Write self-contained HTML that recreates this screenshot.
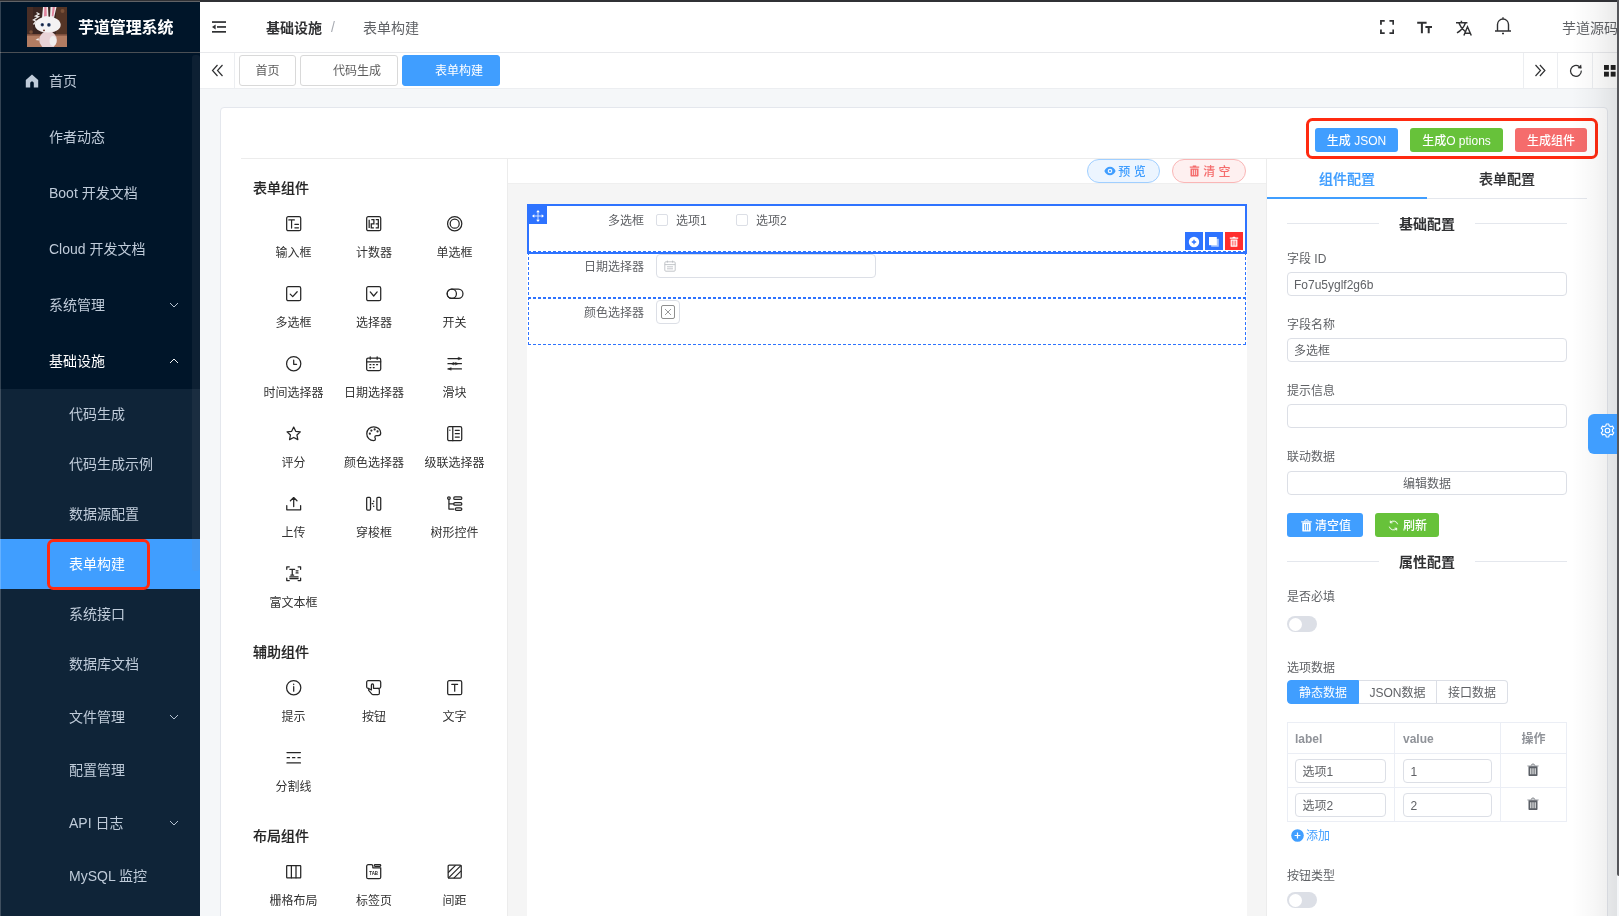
<!DOCTYPE html>
<html lang="zh-CN"><head><meta charset="utf-8"><title>芋道管理系统 - 表单构建</title>
<style>
*{box-sizing:border-box;margin:0;padding:0}
html,body{width:1619px;height:916px;overflow:hidden;background:#f5f7f9}
body{opacity:0.999;font-family:"Liberation Sans","Noto Sans CJK SC",sans-serif;font-size:14px;color:#303133;position:relative}
.abs{position:absolute}
#topbar{position:absolute;left:0;top:0;width:1619px;height:2px;background:#303135;z-index:50}
#side{position:absolute;left:0;top:2px;width:200px;height:914px;background:#001529;overflow:hidden}
#logo{position:absolute;left:0;top:0;width:200px;height:51px;border-bottom:1px solid #4a4f55}
#logo .t{position:absolute;left:78px;top:1px;line-height:50px;color:#fff;font-size:16px;font-weight:700;letter-spacing:-0.1px}
.mi{position:absolute;left:0;width:200px;color:#bfcbd9;font-size:14px;white-space:nowrap;margin-top:-2px}
.mi.open{color:#fff}
.mi.act{background:#409eff;color:#fff}
  .mi .arr{position:absolute;right:21.5px;top:50%;margin-top:-5px}
.mi .home{position:absolute;left:25px;top:50%;margin-top:-7px}
.sub{position:absolute;left:0;width:200px;background:#0f2438;margin-top:-2px}
#redside{position:absolute;left:47px;top:537px;width:103px;height:51px;border:3px solid #ff2a10;border-radius:6.5px}
#head{position:absolute;left:200px;top:2px;width:1419px;height:50.6px;background:#fff;border-bottom:1px solid #e8e9ec}
#tags{position:absolute;left:200px;top:52.6px;width:1419px;height:36px;background:#fff;border-bottom:1px solid #eceef1}
.tag{position:absolute;top:2.8px;height:30.6px;line-height:30.6px;overflow:hidden;border:1px solid #d9d9d9;border-radius:3px;font-size:12px;color:#5c5c5c;background:#fff;text-align:center}
.tag.on{background:#409eff;border-color:#409eff;color:#fff}
.vsep{position:absolute;top:0;width:1px;height:35px;background:#eceef1}
#card{position:absolute;left:220px;top:107px;width:1388px;height:820px;background:#fff;border:1px solid #e4e7ed;border-radius:4px}
#hline{position:absolute;left:241px;top:158px;width:1346px;height:1px;background:#ececec}
#hl2{position:absolute;left:508px;top:183px;width:758px;height:1px;background:#efefef}
#lp{position:absolute;left:241px;top:159px;width:267px;height:757px;border-right:1px solid #ececec;background:#fff}
.gt{position:absolute;left:253px;font-size:14px;font-weight:500;-webkit-text-stroke:0.15px #262626;color:#262626;line-height:20px;white-space:nowrap}
.it{position:absolute;width:80px;text-align:center;color:#262626}
.it .ic{display:block;height:15.4px;line-height:0}
.it .ic svg{overflow:visible}
.it .lb{position:absolute;left:-20px;width:120px;top:28.7px;font-size:12px;line-height:18px;color:#333;white-space:nowrap}
#cp{position:absolute;left:508px;top:183.5px;width:758px;height:733px;background:#f5f5f5}
#cw{position:absolute;left:527px;top:204px;width:720px;height:712px;background:#fff}
.pill{position:absolute;top:159px;height:24px;line-height:24px;overflow:hidden;border-radius:12px;font-size:12px;text-align:center;border:1px solid}
.btn{position:absolute;height:24px;line-height:26px;font-weight:500;overflow:hidden;border-radius:3px;color:#fff;font-size:12px;text-align:center;white-space:nowrap}
#redbox{position:absolute;left:1306.3px;top:118.2px;width:292px;height:40.4px;border:3px solid #ff2a10;border-radius:6.5px;z-index:5}
.wl{position:absolute;font-size:12px;color:#606266;text-align:right;width:110px;line-height:16px;white-space:nowrap}
.rl{position:absolute;left:1287px;font-size:12px;color:#606266;line-height:16px;white-space:nowrap}
.inp{position:absolute;left:1287px;width:280px;height:24px;border:1px solid #dcdfe6;border-radius:4px;background:#fff;font-size:12px;color:#606266;line-height:24px;padding-left:6px;overflow:hidden}
.dv{position:absolute;left:1287px;width:280px;height:1px;background:#e4e7ed}
.dvt{position:absolute;left:1379px;width:96px;text-align:center;background:#fff;font-size:14px;font-weight:700;color:#303133;line-height:20px}
.sw{position:absolute;left:1287px;width:30px;height:16px;border-radius:8px;background:#dcdfe6}
.sw:after{content:"";position:absolute;left:1.500px;top:1.500px;width:13px;height:13px;border-radius:50%;background:#fff}
</style></head><body>
<div id="side">
 <div id="logo">
  <svg class="abs" style="left:27px;top:5px" width="40" height="40" viewBox="0 0 40 40">
   <defs><filter id="bl" x="-10%" y="-10%" width="120%" height="120%"><feGaussianBlur stdDeviation="0.45"/></filter><clipPath id="lc"><rect width="40" height="40"/></clipPath></defs>
   <g clip-path="url(#lc)"><g filter="url(#bl)">
   <rect x="-2" y="-2" width="44" height="44" fill="#3b2620"/>
   <rect x="29" y="-2" width="13" height="32" fill="#553425"/><rect x="-2" y="-2" width="8" height="30" fill="#4a2e26"/>
   <circle cx="35.500" cy="4" r="2" fill="#7a5138"/><circle cx="4" cy="25" r="1.800" fill="#7a5138"/>
   <rect x="-2" y="27.600" width="44" height="14" fill="#b27c62"/><rect x="-2" y="27" width="44" height="1.600" fill="#7d4f3c"/>
   <path d="M9.500 5.500l2.500 1.500-3.500 2 3 .8-5 3.200 2.500 1.200-2.500 3.300" fill="none" stroke="#e9e6e6" stroke-width="1.300"/>
   <path d="M15 11L16 0h5l.5 10zM23 10l.5-10h6L27 11z" fill="#efebec"/>
   <path d="M17 9.500L17.300 0h2.200l.3 9zM24.800 9l.8-9h2.400L26.300 9.500z" fill="#e0829b"/>
   <ellipse cx="21" cy="33" rx="8.800" ry="9" fill="#e9d3d7"/><ellipse cx="26" cy="34" rx="3.500" ry="5" fill="#f1eeee"/>
   <ellipse cx="20.800" cy="17.800" rx="12.900" ry="8.200" fill="#f4f2f3"/>
   <path d="M12 23c3 3 14 3 18 0-2 3-15 4-18 0z" fill="#e6cfd3"/>
   <circle cx="15.300" cy="17.700" r="1.700" fill="#2c426f"/><circle cx="21.900" cy="17.900" r="1.800" fill="#27406e"/>
   <circle cx="15.300" cy="17.700" r=".7" fill="#111"/><circle cx="21.900" cy="17.900" r=".7" fill="#111"/>
   <ellipse cx="17" cy="23.300" rx="1" ry=".9" fill="#6b3a2c"/>
   <path d="M8.500 33l3-2 .5 2.500zM9.500 42l3-2 .8 2z" fill="#f1eeee"/>
   </g></g>
  </svg>
  <div class="t">芋道管理系统</div>
 </div>
 <div class="mi " style="top:53px;height:56px;line-height:56px;padding-left:49px"><svg class="home" width="14" height="14" viewBox="0 0 14 14"><path d="M7 .6L.8 6v7.400h4.400V9.200c0-2.400 3.600-2.400 3.600 0v4.200h4.400V6z" fill="currentColor"/></svg>首页</div><div class="mi " style="top:109px;height:56px;line-height:56px;padding-left:49px">作者动态</div><div class="mi " style="top:165px;height:56px;line-height:56px;padding-left:49px">Boot 开发文档</div><div class="mi " style="top:221px;height:56px;line-height:56px;padding-left:49px">Cloud 开发文档</div><div class="mi " style="top:277px;height:56px;line-height:56px;padding-left:49px">系统管理<svg class="arr" width="10" height="10" viewBox="0 0 10 10" fill="none" stroke="currentColor" stroke-width="0.95"><path d="M1 3l4 4 4-4"/></svg></div><div class="mi open" style="top:333px;height:56px;line-height:56px;padding-left:49px">基础设施<svg class="arr" width="10" height="10" viewBox="0 0 10 10" fill="none" stroke="currentColor" stroke-width="0.95"><path d="M1 7l4-4 4 4"/></svg></div><div class="sub" style="top:389px;height:527px"></div><div class="mi " style="top:389px;height:50px;line-height:50px;padding-left:69px">代码生成</div><div class="mi " style="top:439px;height:50px;line-height:50px;padding-left:69px">代码生成示例</div><div class="mi " style="top:489px;height:50px;line-height:50px;padding-left:69px">数据源配置</div><div class="mi act" style="top:539px;height:50px;line-height:50px;padding-left:69px">表单构建</div><div class="mi " style="top:589px;height:50px;line-height:50px;padding-left:69px">系统接口</div><div class="mi " style="top:639px;height:50px;line-height:50px;padding-left:69px">数据库文档</div><div class="mi " style="top:689px;height:56px;line-height:56px;padding-left:69px">文件管理<svg class="arr" width="10" height="10" viewBox="0 0 10 10" fill="none" stroke="currentColor" stroke-width="0.95"><path d="M1 3l4 4 4-4"/></svg></div><div class="mi " style="top:745px;height:50px;line-height:50px;padding-left:69px">配置管理</div><div class="mi " style="top:795px;height:56px;line-height:56px;padding-left:69px">API 日志<svg class="arr" width="10" height="10" viewBox="0 0 10 10" fill="none" stroke="currentColor" stroke-width="0.95"><path d="M1 3l4 4 4-4"/></svg></div><div class="mi " style="top:851px;height:50px;line-height:50px;padding-left:69px">MySQL 监控</div>
 <div id="redside"></div>
 <div class="abs" style="left:192px;top:53px;width:7.600px;height:516px;border-radius:3px;background:rgba(144,147,153,0.09)"></div>
</div>
<div id="head">
 <svg class="abs" style="left:11px;top:18px" width="16" height="14" viewBox="0 0 16 14" fill="#303133"><rect x="1" y="1.200" width="14" height="1.700"/><rect x="6" y="6.100" width="9" height="1.700"/><rect x="1" y="11" width="14" height="1.700"/><path d="M1 7l3.600-2.600v5.200z"/></svg>
 <div class="abs" style="left:66px;top:0.8px;line-height:50px;font-size:14px;font-weight:700;color:#303133;white-space:nowrap">基础设施</div>
 <div class="abs" style="left:131px;top:0;line-height:50px;font-size:14px;color:#a8abb2">/</div>
 <div class="abs" style="left:163px;top:0.8px;line-height:50px;font-size:14px;color:#606266;white-space:nowrap">表单构建</div>
 <svg class="abs" style="left:1179.6px;top:18px" width="14.2" height="14.2" viewBox="0 0 15 15" fill="none" stroke="#303133" stroke-width="1.900"><path d="M1 5V1h4M10 1h4v4M14 10v4h-4M5 14H1v-4"/></svg>
 <svg class="abs" style="left:1217px;top:18.500px" width="16" height="13" viewBox="0 0 16 13" fill="none" stroke="#303133" stroke-width="2"><path d="M.2 1.800h9.400M4.900 1.800v10.400M8.400 6h6.600M11.700 6v6.200"/></svg>
 <svg class="abs" style="left:1255px;top:17px" width="18" height="18" viewBox="0 0 18 18" fill="none" stroke="#303133" stroke-width="1.450"><path d="M1 3.700h11.400M6.400 1.800v1.900M10.400 3.900C9 8 6 11.500 2 13.900M4 4.300c1.200 3 3.200 5.800 5.900 8M8.900 16.500l3.600-8.700 3.800 8.700M10 14.200h5"/></svg>
 <svg class="abs" style="left:1294px;top:14px" width="18" height="19" viewBox="0 0 18 19" fill="none" stroke="#303133" stroke-width="1.400"><path d="M1 15h16M3.500 15V8.500C3.500 5.500 6 3 9 3s5.500 2.500 5.500 5.500V15M9 3V1.300M8 17.500h2"/></svg>
 <div class="abs" style="left:1362px;top:0.8px;line-height:50px;font-size:14px;color:#606266;white-space:nowrap">芋道源码</div>
</div>
<div id="tags">
 <svg class="abs" style="left:11px;top:11px" width="13" height="13" viewBox="0 0 13 13" fill="none" stroke="#303133" stroke-width="1.200"><path d="M6.500 1L1.500 6.500l5 5.500M11.500 1l-5 5.500 5 5.500"/></svg>
 <div class="vsep" style="left:34px"></div>
 <div class="tag" style="left:39px;width:57px">首页</div>
 <div class="tag" style="left:100px;width:98px;padding-left:16px">代码生成</div>
 <div class="tag on" style="left:202px;width:98px;padding-left:16px">表单构建</div>
 <div class="vsep" style="left:1323px"></div><div class="vsep" style="left:1357.4px"></div><div class="vsep" style="left:1392px"></div>
 <svg class="abs" style="left:1334px;top:11px" width="13" height="13" viewBox="0 0 13 13" fill="none" stroke="#303133" stroke-width="1.200"><path d="M1.500 1l5 5.500-5 5.500M5.900 1l5 5.500-5 5.500"/></svg>
 <svg class="abs" style="left:1368.500px;top:11.600px" width="14" height="14" viewBox="0 0 14 14" fill="none" stroke="#303133" stroke-width="1.250"><path d="M12.300 6.600A5.400 5.400 0 1 1 10.200 2.600"/><path d="M9 3.900l3.300.3L11.900.9z" fill="#303133" stroke-width=".6"/></svg>
 <svg class="abs" style="left:1403.700px;top:12.200px" width="12" height="12" viewBox="0 0 12 12" fill="#222"><rect x="0" y="0" width="4.900" height="4.900"/><rect x="6.700" y="0" width="4.900" height="4.900"/><rect x="0" y="6.700" width="4.900" height="4.900"/><rect x="6.700" y="6.700" width="4.900" height="4.900"/></svg>
</div>
<div id="card"></div>
<div id="hline"></div><div id="hl2"></div>
<div id="redbox"></div>
<div class="btn" style="left:1315px;top:128px;width:83px;background:#409eff">生成 JSON</div>
<div class="btn" style="left:1410px;top:128px;width:93px;background:#67c23a">生成O ptions</div>
<div class="btn" style="left:1515px;top:128px;width:72px;background:#f56c6c">生成组件</div>
<div id="lp"></div>
<div class="gt" style="top:177.5px">表单组件</div><div class="it" style="left:253.5px;top:215.70000000000002px"><span class="ic"><svg width="15.4" height="15.4" viewBox="0 0 16 16" fill="none" stroke="currentColor" stroke-width="1.3" stroke-linecap="round" stroke-linejoin="round" ><rect x="0.7" y="0.7" width="14.6" height="14.6" rx="1.6"/><path d="M2.9 4.1h5.8M5.8 4.1v8.4M9.2 8.7h3.8M9.2 12.3h3.8" stroke-width="1.25"/></svg></span><span class="lb">输入框</span></div><div class="it" style="left:334px;top:215.70000000000002px"><span class="ic"><svg width="15.4" height="15.4" viewBox="0 0 16 16" fill="none" stroke="currentColor" stroke-width="1.3" stroke-linecap="round" stroke-linejoin="round" ><rect x="0.7" y="0.7" width="14.6" height="14.6" rx="1.6"/><path d="M3.3 3.8v8.6M5.5 3.8h2.7v4.3H5.5v4.3h2.7M10.1 3.8h2.7v8.600h-2.7M10.100 8.1h2.7" stroke-linecap="butt" stroke-linejoin="miter"/></svg></span><span class="lb">计数器</span></div><div class="it" style="left:414.5px;top:215.70000000000002px"><span class="ic"><svg width="15.4" height="15.4" viewBox="0 0 16 16" fill="none" stroke="currentColor" stroke-width="1.3" stroke-linecap="round" stroke-linejoin="round" ><circle cx="8" cy="8" r="7.4"/><circle cx="8" cy="8" r="4.7"/></svg></span><span class="lb">单选框</span></div><div class="it" style="left:253.5px;top:285.7px"><span class="ic"><svg width="15.4" height="15.4" viewBox="0 0 16 16" fill="none" stroke="currentColor" stroke-width="1.3" stroke-linecap="round" stroke-linejoin="round" ><rect x="0.7" y="0.7" width="14.6" height="14.6" rx="1.6"/><path d="M4.4 8.4l2.6 2.6 4.6-5"/></svg></span><span class="lb">多选框</span></div><div class="it" style="left:334px;top:285.7px"><span class="ic"><svg width="15.4" height="15.4" viewBox="0 0 16 16" fill="none" stroke="currentColor" stroke-width="1.3" stroke-linecap="round" stroke-linejoin="round" ><rect x="0.7" y="0.7" width="14.6" height="14.6" rx="1.6"/><path d="M4.4 6.2l3.6 4.2 3.6-4.2"/></svg></span><span class="lb">选择器</span></div><div class="it" style="left:414.5px;top:285.7px"><span class="ic"><svg width="15.4" height="15.4" viewBox="0 0 16 16" fill="none" stroke="currentColor" stroke-width="1.3" stroke-linecap="round" stroke-linejoin="round" ><rect x="0.2" y="3.2" width="16.4" height="9.6" rx="4.8"/><circle cx="5" cy="8" r="4.8"/></svg></span><span class="lb">开关</span></div><div class="it" style="left:253.5px;top:355.7px"><span class="ic"><svg width="15.4" height="15.4" viewBox="0 0 16 16" fill="none" stroke="currentColor" stroke-width="1.3" stroke-linecap="round" stroke-linejoin="round" ><circle cx="8" cy="8" r="7.4"/><path d="M8 4.2v4.4h3"/></svg></span><span class="lb">时间选择器</span></div><div class="it" style="left:334px;top:355.7px"><span class="ic"><svg width="15.4" height="15.4" viewBox="0 0 16 16" fill="none" stroke="currentColor" stroke-width="1.3" stroke-linecap="round" stroke-linejoin="round" ><rect x="0.7" y="2.2" width="14.6" height="13" rx="1.6"/><path d="M0.7 6h14.6M4.4 0.8v2.6M11.6 0.8v2.6M4 9h1M7.5 9h1M11 9h1M4 12h1M7.5 12h1"/></svg></span><span class="lb">日期选择器</span></div><div class="it" style="left:414.5px;top:355.7px"><span class="ic"><svg width="15.4" height="15.4" viewBox="0 0 16 16" fill="none" stroke="currentColor" stroke-width="1.3" stroke-linecap="round" stroke-linejoin="round" ><path d="M1 2.6h14M1 8h14M1 13.4h14"/><path d="M12 1.4l2.6 1.2L12 3.8zM7 6.8l-2.6 1.2L7 9.2zM9 6.8l2.6 1.2L9 9.2zM4 12.2l-2.6 1.2L4 14.6z" fill="currentColor" stroke-width="0.6"/></svg></span><span class="lb">滑块</span></div><div class="it" style="left:253.5px;top:425.7px"><span class="ic"><svg width="15.4" height="15.4" viewBox="0 0 16 16" fill="none" stroke="currentColor" stroke-width="1.3" stroke-linecap="round" stroke-linejoin="round" ><path d="M8 1.1l2.1 4.4 4.8.6-3.5 3.3.9 4.8L8 11.9l-4.3 2.3.9-4.8L1.100 6.100l4.800-.600z"/></svg></span><span class="lb">评分</span></div><div class="it" style="left:334px;top:425.7px"><span class="ic"><svg width="15.4" height="15.4" viewBox="0 0 16 16" fill="none" stroke="currentColor" stroke-width="1.3" stroke-linecap="round" stroke-linejoin="round" ><path d="M8 .8C3.900.8.800 4 .800 8s3.200 7.200 7 7.200c1.300 0 2-.800 2-1.700 0-.900-.600-1.300-.600-2.100 0-.900.800-1.500 1.700-1.500h1.800c1.500 0 2.600-1.100 2.600-2.700C15.300 3.700 12 .8 8 .8z"/><circle cx="4" cy="8" r=".5"/><circle cx="5.600" cy="4.800" r=".5"/><circle cx="9" cy="3.600" r=".5"/><circle cx="12" cy="5.600" r=".5"/></svg></span><span class="lb">颜色选择器</span></div><div class="it" style="left:414.5px;top:425.7px"><span class="ic"><svg width="15.4" height="15.4" viewBox="0 0 16 16" fill="none" stroke="currentColor" stroke-width="1.3" stroke-linecap="round" stroke-linejoin="round" ><rect x="0.7" y="0.7" width="14.6" height="14.6" rx="1.6"/><path d="M6 .7v14.600M8.600 4.500h4.200M8.600 8h4.200M8.600 11.500h4.200M3 4.200v.3"/></svg></span><span class="lb">级联选择器</span></div><div class="it" style="left:253.5px;top:495.7px"><span class="ic"><svg width="15.4" height="15.4" viewBox="0 0 16 16" fill="none" stroke="currentColor" stroke-width="1.3" stroke-linecap="round" stroke-linejoin="round" ><path d="M.8 10v4.400h14.400V10M8 11V1.600M4.600 5L8 1.600 11.400 5"/></svg></span><span class="lb">上传</span></div><div class="it" style="left:334px;top:495.7px"><span class="ic"><svg width="15.4" height="15.4" viewBox="0 0 16 16" fill="none" stroke="currentColor" stroke-width="1.3" stroke-linecap="round" stroke-linejoin="round" ><rect x=".7" y="1.400" width="4" height="13.200" rx="1"/><rect x="11.300" y="1.400" width="4" height="13.200" rx="1"/><path d="M8 5.200v.4M8 10.400v.4M6.400 8h1"/></svg></span><span class="lb">穿梭框</span></div><div class="it" style="left:414.5px;top:495.7px"><span class="ic"><svg width="15.4" height="15.4" viewBox="0 0 16 16" fill="none" stroke="currentColor" stroke-width="1.3" stroke-linecap="round" stroke-linejoin="round" ><circle cx="2" cy="2.200" r="1.400"/><path d="M2 3.600v10h5M2 8.200h5"/><rect x="7" y="1" width="8.400" height="2.600" rx="1.300"/><rect x="7" y="6.900" width="8.400" height="2.600" rx="1.300"/><rect x="8.600" y="12.300" width="6.800" height="2.600" rx="1.300"/></svg></span><span class="lb">树形控件</span></div><div class="it" style="left:253.5px;top:565.6999999999999px"><span class="ic"><svg width="15.4" height="15.4" viewBox="0 0 16 16" fill="none" stroke="currentColor" stroke-width="1.3" stroke-linecap="round" stroke-linejoin="round" ><path d="M.8 3.400V.8h2.600M12.600.8h2.600v2.600M15.200 12.600v2.600h-2.600M3.400 15.200H.8v-2.600M4 3.400h5M6.500 3.400v6M5 9.400h3M10.500 5h2M10.500 7.200h2M4 11.400h8.600M4 13h8.600"/></svg></span><span class="lb">富文本框</span></div><div class="gt" style="top:641.5px">辅助组件</div><div class="it" style="left:253.5px;top:679.6999999999999px"><span class="ic"><svg width="15.4" height="15.4" viewBox="0 0 16 16" fill="none" stroke="currentColor" stroke-width="1.3" stroke-linecap="round" stroke-linejoin="round" ><circle cx="8" cy="8" r="7.400"/><path d="M8 7v4.600M8 4.400v.3"/></svg></span><span class="lb">提示</span></div><div class="it" style="left:334px;top:679.6999999999999px"><span class="ic"><svg width="15.4" height="15.4" viewBox="0 0 16 16" fill="none" stroke="currentColor" stroke-width="1.3" stroke-linecap="round" stroke-linejoin="round" ><path d="M3 8.600H2.300C1.400 8.600.7 7.900.7 7V2.300C.7 1.400 1.400.7 2.300.7h11.400c.9 0 1.600.7 1.600 1.600V7c0 .9-.7 1.600-1.600 1.600h-1.400"/><path d="M5.600 10.400V5.200c0-1.400 2.200-1.400 2.200 0v3.400h4.400c1 0 1.700.7 1.700 1.700v3.400c0 .9-.7 1.600-1.600 1.600H7.400c-.6 0-1.100-.3-1.500-.8L2.800 10.800c-.5-.8.700-1.900 1.500-1.200z"/></svg></span><span class="lb">按钮</span></div><div class="it" style="left:414.5px;top:679.6999999999999px"><span class="ic"><svg width="15.4" height="15.4" viewBox="0 0 16 16" fill="none" stroke="currentColor" stroke-width="1.3" stroke-linecap="round" stroke-linejoin="round" ><rect x="0.7" y="0.7" width="14.6" height="14.6" rx="1.6"/><path d="M5 4.600h6M8 4.600v7"/></svg></span><span class="lb">文字</span></div><div class="it" style="left:253.5px;top:749.6999999999999px"><span class="ic"><svg width="15.4" height="15.4" viewBox="0 0 16 16" fill="none" stroke="currentColor" stroke-width="1.3" stroke-linecap="round" stroke-linejoin="round" ><path d="M1 2.600h14M1 13.400h14M1.200 8h2.400M6.800 8h2.400M12.400 8h2.400"/></svg></span><span class="lb">分割线</span></div><div class="gt" style="top:825.5px">布局组件</div><div class="it" style="left:253.5px;top:863.6999999999999px"><span class="ic"><svg width="15.4" height="15.4" viewBox="0 0 16 16" fill="none" stroke="currentColor" stroke-width="1.3" stroke-linecap="round" stroke-linejoin="round" ><rect x=".7" y="1.700" width="14.600" height="12.600" rx=".6"/><path d="M5.600 1.700v12.600M10.400 1.700v12.600"/></svg></span><span class="lb">栅格布局</span></div><div class="it" style="left:334px;top:863.6999999999999px"><span class="ic"><svg width="15.4" height="15.4" viewBox="0 0 16 16" fill="none" stroke="currentColor" stroke-width="1.3" stroke-linecap="round" stroke-linejoin="round" ><path d="M2.300.7h3.200c.9 0 1.600.7 1.600 1.600v1.600h8.200v9.800c0 .9-.7 1.600-1.600 1.600H2.300c-.9 0-1.600-.7-1.600-1.600V2.300C.7 1.400 1.400.7 2.300.7z"/><rect x="8.600" y=".7" width="6.700" height="1.800" rx=".9"/><text x="8" y="11.700" font-size="4.600" font-weight="700" text-anchor="middle" fill="currentColor" stroke="none" font-family="Liberation Sans, sans-serif">TAB</text></svg></span><span class="lb">标签页</span></div><div class="it" style="left:414.5px;top:863.6999999999999px"><span class="ic"><svg width="15.4" height="15.4" viewBox="0 0 16 16" fill="none" stroke="currentColor" stroke-width="1.3" stroke-linecap="round" stroke-linejoin="round" ><rect x="1.200" y="1.200" width="13.600" height="13.600" rx="1.200"/><path d="M1.600 8.600L8.600 1.600M1.600 14.400L14.400 1.600M7.400 14.400l7-7" stroke-width="1.200"/></svg></span><span class="lb">间距</span></div>
<div id="cp"></div>
<div id="cw"></div>

<style>
.w{position:absolute;left:529px;width:716px;height:46px}
.w.sel{outline:2px solid #2e73ff;z-index:2}
.cb{position:absolute;width:12px;height:12px;border:1px solid #dcdfe6;border-radius:2px;background:#fff}
.tx{position:absolute;font-size:12px;color:#606266;line-height:16px;white-space:nowrap}
.ab{position:absolute;top:232px;width:18px;height:18px;z-index:3}
</style>
<div class="pill" style="left:1087.3px;width:72.7px;font-weight:500;background:#ecf5ff;border-color:#a0cfff;color:#409eff">
 <svg style="position:absolute;left:15.300px;top:5px" width="12" height="12" viewBox="0 0 12 12"><path d="M6 1.800C3.400 1.800 1.300 3.600.4 6c.9 2.400 3 4.200 5.600 4.200s4.700-1.800 5.600-4.200C10.700 3.600 8.600 1.800 6 1.800z" fill="#409eff"/><circle cx="6" cy="6" r="2.300" fill="#ecf5ff"/><circle cx="6" cy="6" r="1.100" fill="#409eff"/></svg>
 <span style="position:absolute;left:30px;top:0;white-space:nowrap;word-spacing:0">预 览</span></div>
<div class="pill" style="left:1172.2px;width:73.8px;font-weight:500;background:#fef0f0;border-color:#fab6b6;color:#f56c6c">
 <svg style="position:absolute;left:16.300px;top:5px" width="11" height="12" viewBox="0 0 11 12" fill="#f56c6c"><path d="M3.800.6h3.400v1h3v1.200H.8V1.600h3zM1.500 3.600h8v7.200c0 .4-.3.700-.7.700H2.200c-.4 0-.7-.3-.7-.7z"/><path d="M3.600 4.800v5.200M5.500 4.800v5.200M7.400 4.800v5.200" stroke="#fef0f0" stroke-width=".8"/></svg>
 <span style="position:absolute;left:30px;top:0;white-space:nowrap">清 空</span></div>

<svg class="abs" style="left:527px;top:250px;z-index:2" width="721" height="97" viewBox="527 250 721 97" fill="none" stroke="#2e73ff" stroke-width="1" stroke-dasharray="3 2"><path d="M528 251.5H1246M528 297.5H1246M528 298.5H1246M528 344.5H1246M528.5 252V344M1245.5 252V344"/></svg>
<div class="w sel" style="top:206px"></div>
<div class="abs" style="left:529px;top:206px;width:18px;height:18px;background:#2e73ff;z-index:3">
 <svg style="position:absolute;left:3px;top:4.300px" width="12" height="12" viewBox="0 0 12 12"><path d="M6 1.500v9M1.500 6h9" stroke="#fff" stroke-width=".9" opacity=".85"/><path d="M6 0L7.800 2.300H4.200zM6 12L4.200 9.700h3.600zM0 6l2.300-1.800v3.600zM12 6L9.700 7.800V4.200z" fill="#fff"/></svg>
</div>
<div class="ab" style="left:1185px;background:#2e73ff"><svg width="18" height="18" viewBox="0 0 18 18"><circle cx="9" cy="10" r="5.200" fill="#fff"/><path d="M9 7.800v4.400M6.800 10h4.400" stroke="#2e73ff" stroke-width="1.300"/></svg></div>
<div class="ab" style="left:1205px;background:#2e73ff"><svg width="18" height="18" viewBox="0 0 18 18"><rect x="6.200" y="6.800" width="7.600" height="8" fill="#a8c8ff"/><rect x="4" y="5" width="7.800" height="8.200" fill="#fff"/></svg></div>
<div class="ab" style="left:1225px;background:#ff2e2e"><svg width="18" height="18" viewBox="0 0 18 18" fill="#fff"><path d="M7.400 5.400c0-.9 3.200-.9 3.200 0h2.600v1.300H4.800V5.400zM5.600 7.600h6.800v6.600c0 .4-.3.600-.6.600H6.200c-.3 0-.6-.2-.6-.6z"/><path d="M7.300 8.600v5M9 8.600v5M10.700 8.600v5" stroke="#ff2e2e" stroke-width=".7"/></svg></div>

<div class="wl" style="left:534px;top:213px;z-index:4">多选框</div>
<div class="cb" style="left:656px;top:214px;z-index:4"></div><div class="tx" style="left:676px;top:213px;z-index:4">选项1</div>
<div class="cb" style="left:736px;top:214px;z-index:4"></div><div class="tx" style="left:756px;top:213px;z-index:4">选项2</div>

<div class="wl" style="left:534px;top:259px;z-index:4">日期选择器</div>
<div class="abs" style="left:656px;top:254px;width:220px;height:24px;border:1px solid #dcdfe6;border-radius:4px;background:#fff;z-index:4">
 <svg style="position:absolute;left:7px;top:5px" width="12" height="12" viewBox="0 0 12 12" fill="none" stroke="#b4b7bd" stroke-width=".8"><rect x=".8" y="1.800" width="10.400" height="9.400" rx="1"/><path d="M.8 4.600h10.400M3.400.6v2M8.600.6v2M3 6.800h6M3 8.800h6" /></svg>
</div>

<div class="wl" style="left:534px;top:305px;z-index:4">颜色选择器</div>
<div class="abs" style="left:656px;top:300px;width:24px;height:24px;border:1px solid #dcdfe6;border-radius:4px;background:#fff;z-index:4">
 <div style="position:absolute;left:4px;top:4px;width:14px;height:14px;border:1px solid #8f8f8f;border-radius:2px"></div>
 <svg style="position:absolute;left:7px;top:7px" width="8" height="8" viewBox="0 0 8 8" stroke="#8f8f8f" stroke-width=".9"><path d="M1 1l6 6M7 1L1 7"/></svg>
</div>


<style>
.rb{position:absolute;top:680px;height:24px;line-height:24px;overflow:hidden;font-size:12px;border:1px solid #dcdfe6;border-left:0;background:#fff;color:#606266;text-align:center;white-space:nowrap}
.tb{position:absolute;background:#ebeef5}
.ti{position:absolute;height:24px;border:1px solid #dcdfe6;border-radius:4px;background:#fff;font-size:12px;color:#606266;line-height:24px;padding-left:6.5px;overflow:hidden}
.th{position:absolute;font-size:12px;font-weight:700;color:#909399;line-height:16px;top:731px}
</style>
<div class="abs" style="left:1266px;top:159px;width:321px;height:757px;background:#fff;border-left:1px solid #ececec"></div>
<div class="abs" style="left:1267px;top:198px;width:320px;height:1px;background:#e4e7ed"></div>
<div class="abs" style="left:1267px;top:197px;width:160px;height:2px;background:#409eff"></div>
<div class="abs" style="left:1267px;top:169.3px;width:160px;text-align:center;font-size:14px;font-weight:500;-webkit-text-stroke:0.2px #409eff;color:#409eff;line-height:20px">组件配置</div>
<div class="abs" style="left:1427px;top:169.3px;width:160px;text-align:center;font-size:14px;font-weight:500;-webkit-text-stroke:0.2px #303133;color:#303133;line-height:20px">表单配置</div>

<div class="dv" style="top:223px"></div><div class="dvt" style="top:213.5px">基础配置</div>
<div class="rl" style="top:251px">字段 ID</div>
<div class="inp" style="top:272px">Fo7u5yglf2g6b</div>
<div class="rl" style="top:317px">字段名称</div>
<div class="inp" style="top:338px">多选框</div>
<div class="rl" style="top:383px">提示信息</div>
<div class="inp" style="top:404px"></div>
<div class="rl" style="top:449px">联动数据</div>
<div class="inp" style="top:471px;text-align:center;padding-left:0">编辑数据</div>

<div class="btn" style="left:1287px;top:513px;width:76px;background:#409eff;line-height:27px">
 <svg style="position:absolute;left:14px;top:5.500px" width="11" height="13" viewBox="0 0 11 13"><path d="M3.600 2.400c0-2.200 3.800-2.200 3.800 0" fill="none" stroke="#fff" stroke-width="1"/><rect x=".2" y="2.300" width="10.600" height="1.100" fill="#fff"/><path d="M1.300 3.400h8.400v8.300c0 .5-.4.900-.9.900H2.200c-.5 0-.9-.4-.9-.9z" fill="#fff"/><path d="M3.600 5v6.200M5.500 5v6.200M7.400 5v6.200" stroke="#409eff" stroke-width=".8"/></svg>
 <span style="position:absolute;left:28px;top:0">清空值</span></div>
<div class="btn" style="left:1375px;top:513px;width:64px;background:#67c23a;line-height:27px">
 <svg style="position:absolute;left:12.500px;top:7px" width="11" height="11" viewBox="0 0 11 11" fill="none" stroke="#fff" stroke-width=".95"><path d="M9.700 4.300A4.400 4.400 0 0 0 2.200 2.500M1.300 6.700a4.400 4.400 0 0 0 7.500 1.800"/><path d="M2.300.6v2.200h2.200M8.700 10.400V8.200H6.500"/></svg>
 <span style="position:absolute;left:28px;top:0">刷新</span></div>

<div class="dv" style="top:561px"></div><div class="dvt" style="top:551.5px">属性配置</div>
<div class="rl" style="top:589px">是否必填</div>
<div class="sw" style="top:616px"></div>
<div class="rl" style="top:660px">选项数据</div>
<div class="rb" style="left:1287px;width:72px;background:#409eff;border-color:#409eff;color:#fff;border-left:1px solid #409eff;border-radius:4px 0 0 4px">静态数据</div>
<div class="rb" style="left:1359px;width:78px">JSON数据</div>
<div class="rb" style="left:1437px;width:71px;border-radius:0 4px 4px 0">接口数据</div>

<div class="tb" style="left:1287px;top:722px;width:280px;height:1px"></div>
<div class="tb" style="left:1287px;top:753px;width:280px;height:1px"></div>
<div class="tb" style="left:1287px;top:787px;width:280px;height:1px"></div>
<div class="tb" style="left:1287px;top:821px;width:280px;height:1px"></div>
<div class="tb" style="left:1287px;top:722px;width:1px;height:100px"></div>
<div class="tb" style="left:1394px;top:722px;width:1px;height:100px"></div>
<div class="tb" style="left:1500px;top:722px;width:1px;height:100px"></div>
<div class="tb" style="left:1566px;top:722px;width:1px;height:100px"></div>
<div class="th" style="left:1295px">label</div><div class="th" style="left:1403px">value</div><div class="th" style="left:1501px;width:65px;text-align:center">操作</div>
<div class="ti" style="left:1295px;top:759px;width:91px">选项1</div><div class="ti" style="left:1403px;top:759px;width:89px">1</div>
<div class="ti" style="left:1295px;top:793px;width:91px">选项2</div><div class="ti" style="left:1403px;top:793px;width:89px">2</div>
<div class="abs" style="left:1527.3px;top:762.7px;line-height:0"><svg width="12" height="14" viewBox="0 0 12 14"><path d="M4.200 2.600c0-2 3.600-2 3.600 0" fill="none" stroke="#6b6f76" stroke-width="1"/><rect x=".3" y="2.500" width="11.400" height=".9" fill="#9a9da3"/><path d="M1.500 3.300h9v8.700c0 .6-.4 1-1 1h-7c-.6 0-1-.4-1-1z" fill="#5b5f66"/><path d="M3.800 5.200v6M6 5.200v6M8.200 5.200v6" stroke="#eceded" stroke-width="1.150"/></svg></div>
<div class="abs" style="left:1527.3px;top:796.7px;line-height:0"><svg width="12" height="14" viewBox="0 0 12 14"><path d="M4.200 2.600c0-2 3.600-2 3.600 0" fill="none" stroke="#6b6f76" stroke-width="1"/><rect x=".3" y="2.500" width="11.400" height=".9" fill="#9a9da3"/><path d="M1.500 3.300h9v8.700c0 .6-.4 1-1 1h-7c-.6 0-1-.4-1-1z" fill="#5b5f66"/><path d="M3.800 5.200v6M6 5.200v6M8.200 5.200v6" stroke="#eceded" stroke-width="1.150"/></svg></div>
<svg class="abs" style="left:1291px;top:829px" width="13" height="13" viewBox="0 0 13 13"><circle cx="6.500" cy="6.500" r="6.300" fill="#409eff"/><path d="M6.500 3.600v5.800M3.600 6.500h5.800" stroke="#fff" stroke-width="1.200"/></svg>
<div class="abs" style="left:1306px;top:828px;font-size:12px;color:#409eff;line-height:16px;white-space:nowrap">添加</div>
<div class="rl" style="top:868px">按钮类型</div>
<div class="sw" style="top:892px"></div>

<div class="abs" style="left:1588px;top:414px;width:40px;height:40px;background:#409eff;border-radius:6px 0 0 6px;z-index:56">
 <svg style="position:absolute;left:11.2px;top:8px" width="17" height="17" viewBox="0 0 17 17" fill="none" stroke="#fff" stroke-width="1.1" stroke-linejoin="round"><circle cx="8.5" cy="8.5" r="2.3"/><path d="M6.91 3.76 L7.20 2.03 L9.80 2.03 L10.09 3.76 L11.81 4.75 L13.45 4.14 L14.76 6.39 L13.40 7.51 L13.40 9.49 L14.76 10.61 L13.45 12.86 L11.81 12.25 L10.09 13.24 L9.80 14.97 L7.20 14.97 L6.91 13.24 L5.19 12.25 L3.55 12.86 L2.24 10.61 L3.60 9.49 L3.60 7.51 L2.24 6.39 L3.55 4.14 L5.19 4.75Z"/></svg>
</div>

<div class="abs" style="left:1572px;top:2px;width:45px;height:914px;background:linear-gradient(to right,rgba(0,0,0,0),rgba(0,0,0,0.03) 50%,rgba(0,0,0,0.085));z-index:55;pointer-events:none"></div>
<div id="topbar"></div>
<div class="abs" style="left:0;top:1px;width:200px;height:1px;background:#606266;z-index:51"></div>
<div class="abs" style="left:0;top:2px;width:1px;height:914px;background:rgba(255,255,255,0.2);z-index:51"></div>
<div class="abs" style="left:1617px;top:0;width:2px;height:876px;background:#55565a;border-radius:0 0 0 2px;z-index:60"></div>
</body></html>
